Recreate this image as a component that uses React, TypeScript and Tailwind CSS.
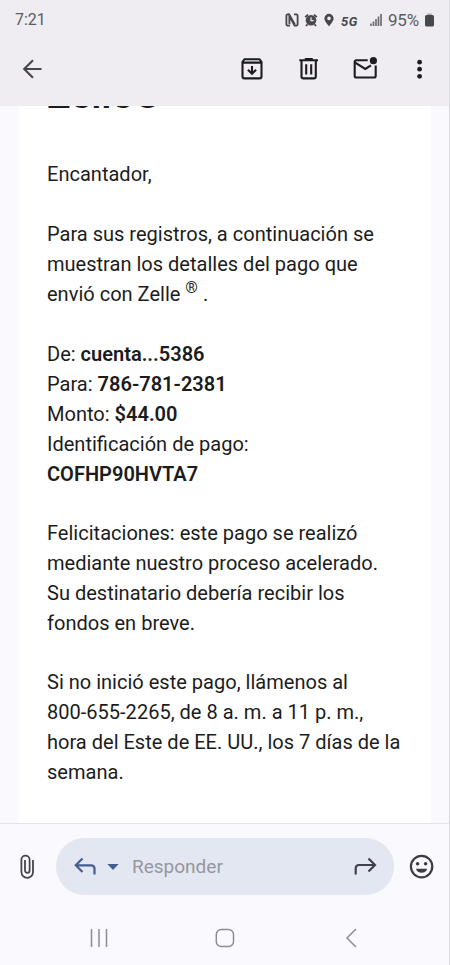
import React from 'react';

const StatusBar = () => (
  <div className="flex items-center justify-between h-[40px] px-[15px] text-[#5c5b60]">
    <span className="text-[16px] leading-[20px]">7:21</span>
    <div className="flex items-center">
      {/* NFC */}
      <svg className="w-[14px] h-[14px]" viewBox="0 0 14 14" fill="none" stroke="#48474c">
        <path d="M5 12.6H2.6Q1.4 12.6 1.4 11.4V2.6Q1.4 1.4 2.6 1.4H4.2L10 11.6" strokeWidth="1.8" />
        <path d="M9 1.4H11.4Q12.6 1.4 12.6 2.6V11.4Q12.6 12.6 11.4 12.6H9.6L4.4 3.4V11.2" strokeWidth="1.8" />
      </svg>
      {/* Alarm */}
      <svg className="ml-[5px] w-[14px] h-[14px]" viewBox="0 0 14 14">
        <circle cx="7" cy="7.3" r="5.3" fill="#48474c" />
        <path d="M1.2 4.2L4 1.6M12.8 4.2L10 1.6M3.5 11.3L2 13M10.5 11.3L12 13" stroke="#48474c" strokeWidth="1.8" fill="none" />
        <path d="M7 4.2V7.6H9.6" stroke="#efedf2" strokeWidth="1.2" fill="none" />
      </svg>
      {/* Location */}
      <svg className="ml-[6px] w-[10px] h-[14px]" viewBox="0 0 10 14">
        <path fillRule="evenodd" d="M5 0.8A4.6 4.6 0 0 0 0.4 5.4C0.4 8.4 5 13.2 5 13.2S9.6 8.4 9.6 5.4A4.6 4.6 0 0 0 5 0.8ZM5 3.6A1.8 1.8 0 1 1 5 7.2A1.8 1.8 0 0 1 5 3.6Z" fill="#48474c" />
      </svg>
      <span className="ml-[7px] mt-[4px] w-[20px] text-[13px] leading-[14px] font-bold italic tracking-[0.6px] text-[#48474c]">5G</span>
      {/* Signal */}
      <svg className="ml-[9px] w-[12px] h-[14px]" viewBox="0 0 12 14">
        <path d="M1 10.5V13M3.5 8.5V13M6 6V13M8.5 3.5V13M11 1V13" stroke="#67666b" strokeWidth="1.6" />
      </svg>
      <span className="ml-[6px] w-[37px] text-[17px] leading-[20px] tracking-[-0.2px]">95%</span>
      {/* Battery */}
      <svg className="w-[9px] h-[14px]" viewBox="0 0 9 14">
        <rect x="2.3" y="0.5" width="4.4" height="3" fill="#a5a4a9" />
        <rect x="0" y="2" width="9" height="11.5" rx="1.5" fill="#48474c" />
      </svg>
    </div>
  </div>
);

const Toolbar = () => (
  <div className="flex items-center h-[57px] pl-[20px] text-[#1d1c21]">
    <button aria-label="Atrás">
      <svg className="w-[24px] h-[24px]" viewBox="0 0 24 24" fill="none" stroke="#45464c" strokeWidth="2.1">
        <path d="M21.5 12H4M13 3.2L4.2 12L13 20.8" />
      </svg>
    </button>
    <button className="ml-[196px]" aria-label="Archivar">
      <svg className="w-[24px] h-[24px]" viewBox="0 0 24 24" fill="none" stroke="currentColor" strokeWidth="2.1">
        <path d="M2.5 4.8L4.6 2.2H19.4L21.5 4.8V19.6Q21.5 21.4 19.7 21.4H4.3Q2.5 21.4 2.5 19.6ZM2.5 5.6H21.5" strokeLinejoin="round" />
        <path d="M12 9V16.5M7.9 12.8L12 16.8L16.1 12.8" />
      </svg>
    </button>
    <button className="ml-[33px]" aria-label="Eliminar">
      <svg className="w-[24px] h-[24px]" viewBox="0 0 24 24" fill="none" stroke="currentColor" strokeWidth="2.1">
        <path d="M2.3 3.2H21M7.8 2H15.8" />
        <path d="M4.5 3.5V19.4Q4.5 21.4 6.5 21.4H16.8Q18.8 21.4 18.8 19.4V3.5M9.2 7.2V17.5M14.2 7.2V17.5" />
      </svg>
    </button>
    <button className="ml-[32px]" aria-label="Marcar como no leído">
      <svg className="w-[26px] h-[24px]" viewBox="0 0 26 24" fill="none" stroke="currentColor" strokeWidth="2.1">
        <path d="M14.7 3.3H3.5Q1.7 3.3 1.7 5.1V18.7Q1.7 20.5 3.5 20.5H20.9Q22.7 20.5 22.7 18.7V8.5" />
        <path d="M2.1 5.7L12.3 12L18 8.3" />
        <circle cx="20.4" cy="3.7" r="3.6" fill="currentColor" stroke="none" />
      </svg>
    </button>
    <button className="ml-[29px]" aria-label="Más opciones">
      <svg className="w-[24px] h-[24px]" viewBox="0 0 24 24" fill="currentColor">
        <circle cx="11.6" cy="5.2" r="2.4" />
        <circle cx="11.6" cy="12.2" r="2.4" />
        <circle cx="11.6" cy="19.3" r="2.4" />
      </svg>
    </button>
  </div>
);

const Message = () => (
  <div className="ml-[19px] w-[412px] h-full bg-white pl-[28px] overflow-hidden text-[20.04px] leading-[30px] text-[#1c1c1c] whitespace-nowrap">
    {/* Heading, scrolled under the toolbar */}
    <h1 className="-mt-[34px] text-[39px] leading-[46px] font-semibold text-[#1c1c1c]">Zelle®</h1>

    <p className="mt-[41px]">Encantador,</p>

    <p className="mt-[30px]">
      Para sus registros, a continuación se
      <br />
      muestran los detalles del pago que
      <br />
      envió con Zelle <sup className="text-[16px] leading-[0]">®</sup> .
    </p>

    <p className="mt-[30px]">
      De: <strong className="font-semibold">cuenta...5386</strong>
      <br />
      Para: <strong className="font-semibold">786-781-2381</strong>
      <br />
      Monto: <strong className="font-semibold">$44.00</strong>
      <br />
      Identificación de pago:
      <br />
      <strong className="font-semibold">COFHP90HVTA7</strong>
    </p>

    <p className="mt-[29px]">
      Felicitaciones: este pago se realizó
      <br />
      mediante nuestro proceso acelerado.
      <br />
      Su destinatario debería recibir los
      <br />
      fondos en breve.
    </p>

    <p className="mt-[29px]">
      Si no inició este pago, llámenos al
      <br />
      800-655-2265, de 8 a. m. a 11 p. m.,
      <br />
      hora del Este de EE. UU., los 7 días de la
      <br />
      semana.
    </p>
  </div>
);

const ReplyBar = () => (
  <div className="flex items-center h-[86px] pl-[14px] border-t border-[#e4e4e9]">
    <button aria-label="Adjuntar">
      <svg className="w-[26px] h-[26px]" viewBox="0 0 26 26" fill="none" stroke="#45464c" strokeWidth="1.8">
        <path d="M19 6V18.1A5.8 5.8 0 0 1 7.4 18.1V5.8A4.1 4.1 0 0 1 15.6 5.8V16.6A2.3 2.3 0 0 1 11 16.6V6" />
      </svg>
    </button>
    <div className="ml-[16px] flex items-center w-[338px] h-[57px] rounded-full bg-[#e3e7f1]">
      <svg className="ml-[17px] w-[24px] h-[24px]" viewBox="0 0 24 24" fill="none" stroke="#465d8f" strokeWidth="2.2">
        <path d="M9.5 3.5L2.8 10.3L9.5 17M3 10.3H18Q21.5 10.3 21.5 13.8V19.5" />
      </svg>
      <svg className="ml-[10px] w-[12px] h-[6px]" viewBox="0 0 12 6">
        <path d="M0.3 0H11.7L6 6Z" fill="#465d8f" />
      </svg>
      <span className="ml-[13px] w-[92px] text-[19px] leading-[24px] text-[#96979e]">Responder</span>
      <svg className="ml-[129px] w-[24px] h-[24px]" viewBox="0 0 24 24" fill="none" stroke="#414249" strokeWidth="2.2">
        <path d="M15.5 3.5L22 10L15.5 16.5M21.8 10H6Q2.7 10 2.7 13.8V19.5" />
      </svg>
    </div>
    <button className="ml-[15px]" aria-label="Emoji">
      <svg className="w-[26px] h-[26px]" viewBox="0 0 26 26">
        <circle cx="12.6" cy="12.6" r="10.7" fill="none" stroke="#3d3e44" strokeWidth="2.2" />
        <circle cx="8.6" cy="9.8" r="1.8" fill="#3d3e44" />
        <circle cx="16.6" cy="9.8" r="1.8" fill="#3d3e44" />
        <path d="M7 14.8H18.2C17.2 20 8 20 7 14.8Z" fill="#3d3e44" />
      </svg>
    </button>
  </div>
);

const NavBar = () => (
  <div className="flex items-center h-[56px] pl-[90px] pt-[1px]">
    <svg className="w-[18px] h-[20px]" viewBox="0 0 18 20">
      <path d="M1.5 1V19M9 1V19M16.5 1V19" stroke="#8d8c91" strokeWidth="1.5" />
    </svg>
    <svg className="ml-[107px] w-[20px] h-[20px]" viewBox="0 0 20 20">
      <rect x="1.3" y="1.6" width="17.2" height="16.8" rx="5" fill="none" stroke="#8d8c91" strokeWidth="1.5" />
    </svg>
    <svg className="ml-[109px] w-[14px] h-[20px]" viewBox="0 0 14 20">
      <path d="M12 1L3 10L12 19" fill="none" stroke="#8d8c91" strokeWidth="1.5" />
    </svg>
  </div>
);

const App = () => {
  return (
    <div className="flex flex-col w-[450px] h-[965px] overflow-hidden bg-[#faf9fe] border-r border-[#d9d8dd] font-['Roboto',sans-serif]">
      <header className="h-[106px] shrink-0 bg-[#efedf2]">
        <StatusBar />
        <Toolbar />
      </header>
      <main className="flex-1 min-h-0 overflow-hidden">
        <Message />
      </main>
      <footer className="h-[142px] shrink-0">
        <ReplyBar />
        <NavBar />
      </footer>
    </div>
  );
};

export default App;
